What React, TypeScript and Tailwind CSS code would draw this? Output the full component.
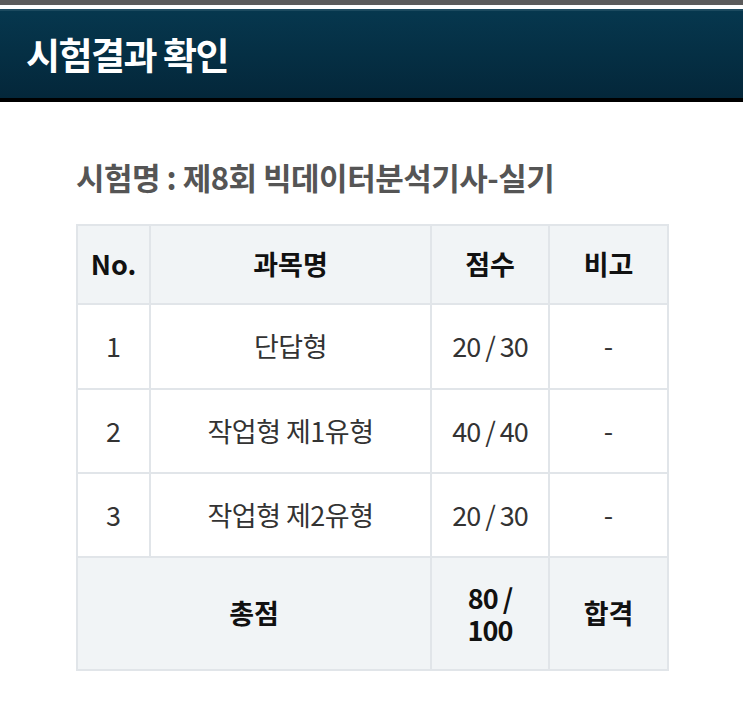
import React from "react";

const font = { fontFamily: '"Noto Sans CJK KR", "Noto Sans", sans-serif' };

export default function App() {
  const rows = [
    { no: "1", name: "단답형", score: "20 / 30", note: "-" },
    { no: "2", name: "작업형 제1유형", score: "40 / 40", note: "-" },
    { no: "3", name: "작업형 제2유형", score: "20 / 30", note: "-" },
  ];
  const cell = "border-2 border-[#e1e5e9] text-center align-middle";
  return (
    <div className="w-[743px] h-[716px] bg-white overflow-hidden" style={font}>
      <div className="h-[5px] bg-[#5b5b5b]" />
      <div className="h-[4px] bg-white" />
      <div className="h-[2px] bg-[#1c4a5f]" />
      <div className="h-[87px] bg-gradient-to-b from-[#06374e] to-[#04273a] flex items-center pl-[26px]">
        <h1 className="text-white text-[37px] font-bold tracking-[-1.5px] leading-none">시험결과 확인</h1>
      </div>
      <div className="h-[4px] bg-black" />
      <div className="px-[76px] pt-[54px]">
        <h2 className="text-[#555] text-[31px] font-bold tracking-[-0.5px] leading-[42px]">
          시험명 : 제8회 빅데이터분석기사-실기
        </h2>
        <table className="mt-[26px] w-[591px] table-fixed border-collapse text-[27px]">
          <colgroup>
            <col className="w-[73px]" />
            <col className="w-[281px]" />
            <col className="w-[118px]" />
            <col className="w-[119px]" />
          </colgroup>
          <thead>
            <tr className="h-[79px] bg-[#f1f4f6] text-[#111] font-bold">
              <th className={cell}>No.</th>
              <th className={cell}>과목명</th>
              <th className={cell}>점수</th>
              <th className={cell}>비고</th>
            </tr>
          </thead>
          <tbody className="text-[#333]">
            {rows.map((r, i) => (
              <tr key={r.no} className={i === 0 ? "h-[85px]" : "h-[84px]"}>
                <td className={cell}>{r.no}</td>
                <td className={cell + " tracking-[-0.5px]"}>{r.name}</td>
                <td className={cell + " tracking-[-1px]"}>{r.score}</td>
                <td className={cell}>{r.note}</td>
              </tr>
            ))}
            <tr className="h-[113px] bg-[#f1f4f6] text-[#111] font-bold">
              <td className={cell} colSpan={2}>총점</td>
              <td className={cell + " tracking-[-1px]"}>
                <div className="leading-[32px]">80 /</div>
                <div className="leading-[32px]">100</div>
              </td>
              <td className={cell}>합격</td>
            </tr>
          </tbody>
        </table>
      </div>
    </div>
  );
}
